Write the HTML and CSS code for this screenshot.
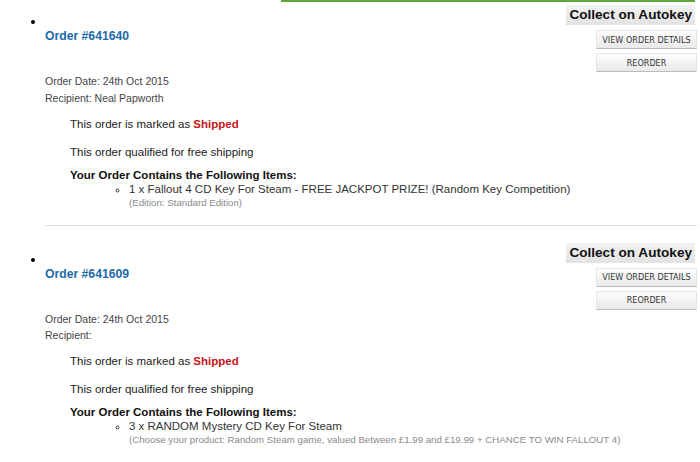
FILE: index.html
```html
<!DOCTYPE html>
<html lang="en">
<head>
    <meta charset="UTF-8">
    <meta name="viewport" content="width=device-width, initial-scale=1.0">
    <title>My Orders</title>
    <link rel="stylesheet" href="styles.css">
</head>
<body>
    <div class="top-bar"></div>

    <ul class="orders">
        <!-- Order 641640 -->
        <li class="order">
            <span class="bullet"></span>
            <div class="order-body">
                <div class="order-actions">
                    <button class="btn-collect">Collect on Autokey</button>
                    <button class="btn-small">VIEW ORDER DETAILS</button>
                    <button class="btn-small">REORDER</button>
                </div>
                <a class="order-title" href="#">Order #641640</a>
                <div class="order-meta">
                    <div>Order Date: 24th Oct 2015</div>
                    <div>Recipient: Neal Papworth</div>
                </div>
                <p class="order-note first">This order is marked as <strong class="status">Shipped</strong></p>
                <p class="order-note">This order qualified for free shipping</p>
                <div class="items-title">Your Order Contains the Following Items:</div>
                <ul class="items">
                    <li>1 x Fallout 4 CD Key For Steam - FREE JACKPOT PRIZE! (Random Key Competition)
                        <div class="item-option">(Edition: Standard Edition)</div>
                    </li>
                </ul>
            </div>
        </li>

        <!-- Order 641609 -->
        <li class="order">
            <span class="bullet"></span>
            <div class="order-body">
                <div class="order-actions">
                    <button class="btn-collect">Collect on Autokey</button>
                    <button class="btn-small">VIEW ORDER DETAILS</button>
                    <button class="btn-small">REORDER</button>
                </div>
                <a class="order-title" href="#">Order #641609</a>
                <div class="order-meta">
                    <div>Order Date: 24th Oct 2015</div>
                    <div>Recipient: </div>
                </div>
                <p class="order-note first">This order is marked as <strong class="status">Shipped</strong></p>
                <p class="order-note">This order qualified for free shipping</p>
                <div class="items-title">Your Order Contains the Following Items:</div>
                <ul class="items">
                    <li>3 x RANDOM Mystery CD Key For Steam
                        <div class="item-option">(Choose your product: Random Steam game, valued Between £1.99 and £19.99 + CHANCE TO WIN FALLOUT 4)</div>
                    </li>
                </ul>
            </div>
        </li>
    </ul>
</body>
</html>
```

FILE: styles.css
```css
body {
    font-family: "Liberation Sans", Arial, sans-serif;
    margin: 0;
    background: #fff;
    color: #333;
}
.top-bar {
    height: 2px;
    margin: 0 5px 3px 281px;
    background: #62a63a;
}
.orders {
    list-style: none;
    margin: 0;
    padding: 0;
}
.order {
    display: grid;
    grid-template-columns: 45px 1fr;
    margin-bottom: 17px;
}
.bullet {
    width: 4px;
    height: 4px;
    margin: 15px 0 0 31px;
    border-radius: 50%;
    background: #000;
}
.order-body {
    margin-right: 3px;
    padding-bottom: 16px;
    border-bottom: 1px solid #dcdcdc;
}
.order-actions {
    float: right;
    display: flex;
    flex-direction: column;
    align-items: flex-end;
}
.btn-collect {
    height: 20px;
    margin-right: 2px;
    padding: 0 3px;
    border: 0;
    background: linear-gradient(#f3f3f3, #e2e2e2);
    font-family: "Liberation Sans", Arial, sans-serif;
    font-weight: bold;
    font-size: 13.6px;
    line-height: 20px;
    color: #111;
}
.btn-small {
    width: 101px;
    height: 19px;
    margin-top: 5px;
    padding: 0;
    border: 1px solid #e6e6e6;
    border-bottom-color: #bcbcbc;
    background: linear-gradient(#fdfdfd, #e9e9e9);
    font-family: "DejaVu Sans Condensed", "DejaVu Sans", sans-serif;
    font-size: 9px;
    color: #333;
}
.btn-small + .btn-small {
    margin-top: 4px;
}
.order-title {
    display: block;
    margin-top: 23px;
    font-size: 12.2px;
    font-weight: bold;
    line-height: 16px;
    color: #1d6aa9;
    text-decoration: none;
}
.order-meta {
    margin-top: 29px;
    font-size: 10.5px;
    line-height: 16.5px;
    color: #444;
}
.order-note {
    margin: 12px 0 0 25px;
    font-size: 11.5px;
    line-height: 16px;
    color: #222;
}
.order-note.first {
    margin-top: 9.5px;
}
.status {
    color: #c8131b;
}
.items-title {
    margin: 8px 0 0 25px;
    font-size: 11.5px;
    font-weight: bold;
    line-height: 14px;
    color: #111;
}
.items {
    list-style: circle;
    margin: 0;
    padding-left: 84px;
    font-size: 11.5px;
    line-height: 14px;
    color: #333;
}
.item-option {
    font-size: 9.7px;
    line-height: 13px;
    color: #8a8a8a;
}
```
